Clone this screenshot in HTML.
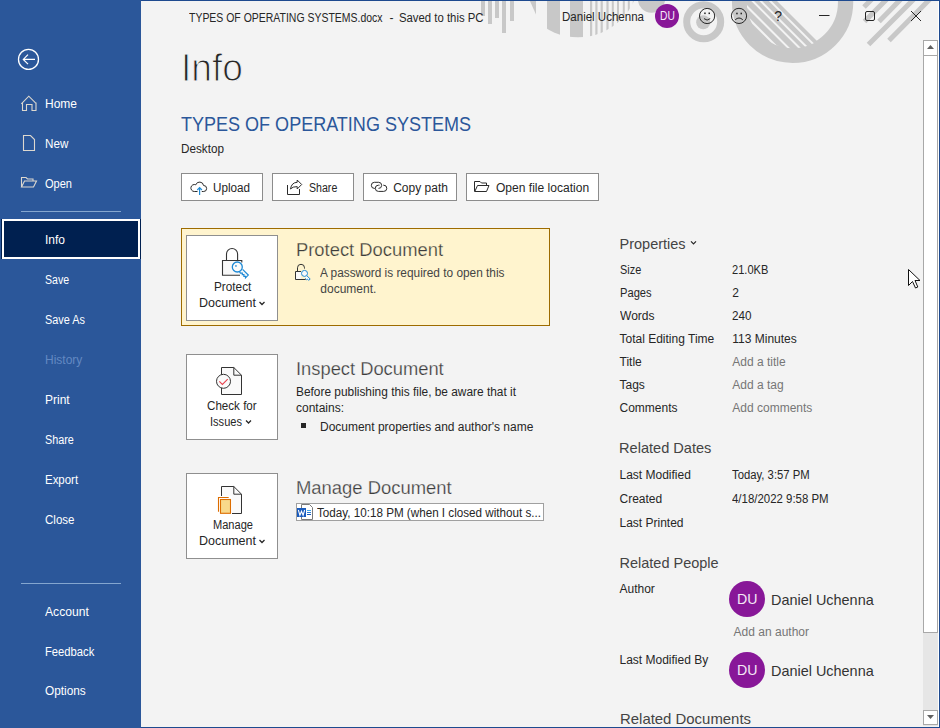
<!DOCTYPE html>
<html><head><meta charset="utf-8"><style>
html,body{margin:0;padding:0;width:940px;height:728px;overflow:hidden;background:#f3f3f3;font-family:"Liberation Sans", sans-serif}
</style></head><body>
<div style="position:relative;width:940px;height:728px;overflow:hidden">
<div style="position:absolute;left:0;top:0;width:141px;height:728px;background:#2b579a"></div>
<svg style="position:absolute;left:0;top:0" width="141" height="728">
<circle cx="28.5" cy="59.4" r="10" fill="none" stroke="#fff" stroke-width="1.3"/>
<path d="M23.6 59.4 H35 M28 54.7 L23.3 59.4 L28 64.1" fill="none" stroke="#fff" stroke-width="1.2"/>
<g fill="none" stroke="#ddd8cf" stroke-width="1.1">
<path d="M21.3 103.8 L28.8 96.2 L36.5 103.8 M22.5 102.5 V110.5 H26.5 V104.5 H32 V110.5 H36 V102.5"/>
<path d="M23.5 135.5 H30.5 L34.5 139.5 V150.5 H23.5 Z"/>
<path d="M21.5 187 V177.5 H26 L27.5 179 H33 V181 M21.5 187 H33.5 L36.5 181 H24.5 Z"/>
</g>
<line x1="21" y1="211.5" x2="121" y2="211.5" stroke="#84a6cf" stroke-width="1"/>
<line x1="21" y1="583.5" x2="121" y2="583.5" stroke="#84a6cf" stroke-width="1"/>
</svg>
<div style="position:absolute;left:1px;top:219px;width:140px;height:40px;background:#002050"></div>
<div style="position:absolute;left:2px;top:219px;width:138px;height:40px;box-sizing:border-box;border:2px solid #fff"></div>
<div style="position:absolute;left:141px;top:0;width:799px;height:728px;background:#f3f3f3"></div>
<svg style="position:absolute;left:0;top:0" width="940" height="100">
<defs><clipPath id="top"><rect x="141" y="1" width="798" height="99"/></clipPath>
<clipPath id="semi"><circle cx="578" cy="-24" r="61.3"/></clipPath>
<clipPath id="inner"><circle cx="792.8" cy="2.3" r="46"/></clipPath>
</defs>
<g clip-path="url(#top)" fill="#c8c8c8">
<rect x="481" y="0" width="4" height="16"/>
<rect x="488" y="0" width="4" height="24"/>
<rect x="495" y="0" width="4" height="18"/>
<rect x="502" y="0" width="4" height="33"/>
<rect x="510" y="0" width="4" height="21"/>
<path d="M529.5 0 H536 V14.5 Z"/>
<g clip-path="url(#semi)">
<path d="M547 0 H560 V40 H547 Z M570 0 H583 V40 H570 Z"/>
<rect x="590" y="0" width="2.2" height="40"/><rect x="595.3" y="0" width="2.2" height="40"/>
<rect x="600.6" y="0" width="2.2" height="40"/><rect x="606.4" y="0" width="2.2" height="40"/>
<rect x="611.8" y="0" width="2" height="40"/><rect x="617" y="0" width="2" height="40"/>
<rect x="622.8" y="0" width="2" height="40"/><rect x="627.8" y="0" width="2" height="40"/>
<rect x="632.8" y="0" width="2" height="40"/>
</g>
<circle cx="651.5" cy="-0.8" r="13.6"/>
<circle cx="703.7" cy="21.8" r="17" fill="none" stroke="#c8c8c8" stroke-width="7"/>
<circle cx="703.2" cy="22.3" r="7"/>
<circle cx="792.6" cy="2.3" r="53" fill="none" stroke="#c8c8c8" stroke-width="15.3"/>
<g clip-path="url(#inner)">
<path d="M700 -76 L852 76 L700 76 Z" fill="#c8c8c8"/>
<path d="M720 -10 L810 80 M730.5 -10 L820.5 80 M741.6 -10 L831.6 80 M749.7 -10 L839.7 80 M759.2 -10 L849.2 80" stroke="#f3f3f3" stroke-width="2" fill="none"/>
</g>
<g stroke="#c8c8c8" stroke-width="5" fill="none">
<path d="M864 7 L872 -1 M864.5 21.5 L888 -2 M879 21.5 L902 -2 M868.5 44.5 L916 -3 M889 40.5 L932 -3"/>
</g>
</g>
</svg>
<div style="position:absolute;left:141px;top:0;width:799px;height:1px;background:#1e4a8f"></div>
<div style="position:absolute;left:939px;top:0;width:1px;height:728px;background:#1e4a8f"></div>
<div style="position:absolute;left:141px;top:727px;width:799px;height:1px;background:#1e4a8f"></div>
<div style="position:absolute;left:654.9px;top:3.7px;width:24.2px;height:24.2px;border-radius:50%;background:#881798"></div>
<svg style="position:absolute;left:690px;top:0" width="250" height="35">
<g fill="none" stroke="#262626" stroke-width="1">
<circle cx="17.1" cy="16" r="7.6"/><path d="M14 18.6 Q17.1 21.6 20.2 18.6"/>
<circle cx="49" cy="15.9" r="7.6"/><path d="M45.2 19.8 Q49 16.2 52.8 19.8"/>
</g>
<g fill="#262626"><rect x="14.2" y="12.5" width="1.5" height="1.6"/><rect x="18.5" y="12.5" width="1.5" height="1.6"/>
<rect x="46.2" y="12.7" width="1.5" height="1.6"/><rect x="50.5" y="12.7" width="1.5" height="1.6"/></g>
<path d="M129 15.5 H139.5" stroke="#262626" stroke-width="1"/>
<rect x="175.5" y="11.5" width="9" height="9" rx="1.5" fill="none" stroke="#262626" stroke-width="1"/>
<path d="M221 11 L231 21 M231 11 L221 21" stroke="#262626" stroke-width="1"/>
</svg>
<div style="position:absolute;left:181px;top:173px;width:82px;height:28px;box-sizing:border-box;border:1px solid #8c8c8c;background:#fff"></div>
<div style="position:absolute;left:272px;top:173px;width:82px;height:28px;box-sizing:border-box;border:1px solid #8c8c8c;background:#fff"></div>
<div style="position:absolute;left:363px;top:173px;width:94px;height:28px;box-sizing:border-box;border:1px solid #8c8c8c;background:#fff"></div>
<div style="position:absolute;left:466px;top:173px;width:133px;height:28px;box-sizing:border-box;border:1px solid #8c8c8c;background:#fff"></div>
<svg style="position:absolute;left:0;top:0" width="620" height="210">
<g fill="none" stroke="#2b2b2b" stroke-width="1">
<path d="M197.5 191.5 H194.3 A3.5 3.5 0 1 1 195.8 184.8 A4 4 0 0 1 203.56 185.5 A3 3 0 1 1 203.7 191.5 H201.8"/>
<path d="M287.5 185 V194.5 H299.5 V189"/>
<path d="M290.5 189 Q291.5 182.5 297.2 182.3 V180 L301.7 184.5 L297.2 189 V186.6 Q292.5 186.5 290.5 189 Z" stroke-linejoin="round"/>
<path d="M375 188.4 H374.4 A3.05 3.05 0 0 1 374.4 182.3 H378.7 A3.05 3.05 0 0 1 378.5 188.4"/>
<path d="M379.5 185.2 H378.4 A3.1 3.1 0 0 0 378.4 191.4 H383.7 A3.1 3.1 0 0 0 383.7 185.2 H383.2"/>
<path d="M474.5 191.5 V181.5 H480 L481.5 183 H486.5 V185.5"/>
<path d="M474.8 191.5 L477.5 185.5 H489 L486.5 191.5 Z"/>
</g>
<path d="M199.6 195 V187.8 M197.3 190 L199.6 187.7 L201.9 190" fill="none" stroke="#1e8ad6" stroke-width="1.2"/>
</svg>
<div style="position:absolute;left:181px;top:228px;width:369px;height:98px;box-sizing:border-box;border:1px solid #9d6b00;background:#fff4ce"></div>
<div style="position:absolute;left:186px;top:235px;width:92px;height:86px;box-sizing:border-box;border:1px solid #8f8f8f;background:#fff"></div>
<div style="position:absolute;left:186px;top:354px;width:92px;height:86px;box-sizing:border-box;border:1px solid #8f8f8f;background:#fff"></div>
<div style="position:absolute;left:301px;top:423px;width:4.5px;height:4.5px;background:#262626"></div>
<div style="position:absolute;left:186px;top:473px;width:92px;height:86px;box-sizing:border-box;border:1px solid #8f8f8f;background:#fff"></div>
<div style="position:absolute;left:296px;top:503px;width:248px;height:18px;box-sizing:border-box;border:1px solid #a0a0a0;background:#fff"></div>
<svg style="position:absolute;left:0;top:0" width="600" height="600">
<g fill="none" stroke="#444" stroke-width="1">
<path d="M259.5 302 L262 304.5 L264.5 302" stroke="#262626" stroke-width="1.25"/>
<path d="M246 420.5 L248.5 423 L251 420.5" stroke="#262626" stroke-width="1.25"/>
<path d="M259.5 540 L262 542.5 L264.5 540" stroke="#262626" stroke-width="1.25"/>
</g>
<!-- lock -->
<path d="M226.5 260.5 V254 A5.55 5.55 0 0 1 237.6 254 V260.5" fill="none" stroke="#333" stroke-width="1.1"/>
<path d="M222.5 260.5 H241.5 V275.3 H222.5 Z" fill="#f8f8f8"/>
<path d="M241.8 262.5 V260.5 H222.5 V275.3 H240" fill="none" stroke="#333" stroke-width="1.1"/>
<path d="M242.6 269.4 L248.3 275.1 L245.5 277.9 V276.3 H243.9 V274.7 H242.3 V273.1 H240.5 L239.5 272" fill="#fafafa" stroke="#1e8ad6" stroke-width="1.2" stroke-linejoin="miter"/>
<circle cx="237.3" cy="267" r="5" fill="#fafafa" stroke="#1e8ad6" stroke-width="1.3"/>
<rect x="235.2" y="265.2" width="1.5" height="1.5" fill="#1e8ad6"/>
<!-- small lock -->
<path d="M297.5 271.5 V267.8 A3.5 3.5 0 0 1 304.5 267.8 V268.6" fill="none" stroke="#333" stroke-width="1"/>
<path d="M301 271.5 H295.5 V279.5 H305.7" fill="none" stroke="#333" stroke-width="1"/>
<rect x="296" y="272" width="5" height="7" fill="#fafafa"/>
<path d="M306.3 275.2 L310.2 279 L308.6 280.3 L307.4 279.1 L306.6 279.7 L305.2 278.3" fill="#fafafa" stroke="#1e8ad6" stroke-width="1"/>
<circle cx="304.5" cy="273.4" r="3" fill="#fafafa" stroke="#1e8ad6" stroke-width="1"/>
<!-- check doc -->
<path d="M221.5 367.5 H233.8 L241.5 375.2 V394.5 H221.5 Z" fill="#fafafa" stroke="#333" stroke-width="1"/>
<path d="M233.8 367.5 V375.2 H241.5" fill="none" stroke="#333" stroke-width="1"/>
<circle cx="223.5" cy="381.3" r="7" fill="#fafafa" stroke="#333" stroke-width="1"/>
<path d="M219.3 381.3 L222.4 384.4 L227.7 379.1" fill="none" stroke="#e8414d" stroke-width="1.1"/>
<!-- manage doc -->
<path d="M221.5 486.5 H233.8 L241.5 494.2 V513.5 H221.5 Z" fill="#fafafa" stroke="#333" stroke-width="1"/>
<path d="M233.8 486.5 V494.2 H241.5" fill="none" stroke="#333" stroke-width="1"/>
<rect x="217" y="496" width="15" height="19" fill="#fff"/>
<path d="M218.5 511.8 V497.5 H228.7" fill="none" stroke="#dc6d00" stroke-width="1.1"/>
<rect x="220.5" y="499.5" width="10" height="13.8" fill="#f8d98b" stroke="#dc6d00" stroke-width="1.1"/>
<!-- word icon -->
<path d="M301.5 504.5 H309.5 L312.5 507.5 V519.5 H301.5 Z" fill="#fff" stroke="#7a7a7a" stroke-width="1"/>
<rect x="297" y="508" width="9" height="9" fill="#185abd"/>
<path d="M298.4 510 L299.9 515.3 L301.5 511.3 L303.1 515.3 L304.6 510" fill="none" stroke="#fff" stroke-width="1.1"/>
<path d="M307 510.5 H311" stroke="#41a5ee" stroke-width="1"/>
<path d="M307 512.5 H311" stroke="#2b7cd3" stroke-width="1"/>
<path d="M307 514.5 H311" stroke="#185abd" stroke-width="1"/>
</svg>
<svg style="position:absolute;left:690px;top:240px" width="10" height="8"><path d="M1 1.3 L3.5 3.8 L6 1.3" fill="none" stroke="#262626" stroke-width="1.2"/></svg>
<div style="position:absolute;left:729px;top:580.6px;width:36px;height:36px;border-radius:50%;background:#881798"></div>
<div style="position:absolute;left:729px;top:651.5px;width:36px;height:36px;border-radius:50%;background:#881798"></div>
<div style="position:absolute;left:923px;top:40px;width:15px;height:686px;background:#e6e6e6"></div>
<div style="position:absolute;left:923px;top:40px;width:15px;height:16px;box-sizing:border-box;border:1px solid #a8a8a8;background:#fff"></div>
<div style="position:absolute;left:923px;top:55px;width:15px;height:578px;box-sizing:border-box;border:1px solid #a8a8a8;background:#fff"></div>
<div style="position:absolute;left:923px;top:710px;width:15px;height:15px;box-sizing:border-box;border:1px solid #a8a8a8;background:#fff"></div>
<svg style="position:absolute;left:923px;top:40px" width="15" height="686">
<path d="M4 9 L7.5 5 L11 9 Z" fill="#606060"/>
<path d="M4 675 L7.5 679 L11 675 Z" fill="#606060"/>
</svg>
<div style="position:absolute;left:938px;top:1px;width:1px;height:726px;background:#fff"></div>
<svg style="position:absolute;left:905px;top:266px" width="16" height="26">
<path d="M3.5 3.5 V19.5 L7.5 15.5 L10.5 22 L12.8 21 L10 14.5 H15 Z" fill="#fff" stroke="#111" stroke-width="1"/>
</svg>
<div style="position:absolute;left:45.00px;top:97.54px;font-size:12px;line-height:12px;color:#fff;white-space:pre;">Home</div>
<div style="position:absolute;left:45.00px;top:137.64px;font-size:12px;line-height:12px;color:#fff;white-space:pre;transform:scaleX(0.9700);transform-origin:0 0;">New</div>
<div style="position:absolute;left:45.00px;top:177.54px;font-size:12px;line-height:12px;color:#fff;white-space:pre;transform:scaleX(0.9200);transform-origin:0 0;">Open</div>
<div style="position:absolute;left:45.00px;top:233.74px;font-size:12px;line-height:12px;color:#fff;white-space:pre;">Info</div>
<div style="position:absolute;left:45.00px;top:273.64px;font-size:12px;line-height:12px;color:#fff;white-space:pre;transform:scaleX(0.8800);transform-origin:0 0;">Save</div>
<div style="position:absolute;left:45.00px;top:313.64px;font-size:12px;line-height:12px;color:#fff;white-space:pre;transform:scaleX(0.9050);transform-origin:0 0;">Save As</div>
<div style="position:absolute;left:45.00px;top:353.64px;font-size:12px;line-height:12px;color:#6389c2;white-space:pre;">History</div>
<div style="position:absolute;left:45.00px;top:393.64px;font-size:12px;line-height:12px;color:#fff;white-space:pre;">Print</div>
<div style="position:absolute;left:45.00px;top:433.64px;font-size:12px;line-height:12px;color:#fff;white-space:pre;transform:scaleX(0.9000);transform-origin:0 0;">Share</div>
<div style="position:absolute;left:45.00px;top:473.64px;font-size:12px;line-height:12px;color:#fff;white-space:pre;transform:scaleX(0.9540);transform-origin:0 0;">Export</div>
<div style="position:absolute;left:45.00px;top:513.64px;font-size:12px;line-height:12px;color:#fff;white-space:pre;transform:scaleX(0.9600);transform-origin:0 0;">Close</div>
<div style="position:absolute;left:45.00px;top:605.84px;font-size:12px;line-height:12px;color:#fff;white-space:pre;transform:scaleX(1.0100);transform-origin:0 0;">Account</div>
<div style="position:absolute;left:45.00px;top:645.64px;font-size:12px;line-height:12px;color:#fff;white-space:pre;transform:scaleX(0.9360);transform-origin:0 0;">Feedback</div>
<div style="position:absolute;left:45.00px;top:685.44px;font-size:12px;line-height:12px;color:#fff;white-space:pre;transform:scaleX(0.9860);transform-origin:0 0;">Options</div>
<div style="position:absolute;left:188.50px;top:12.04px;font-size:12px;line-height:12px;color:#262626;white-space:pre;transform:scaleX(0.8723);transform-origin:0 0;">TYPES OF OPERATING SYSTEMS.docx</div>
<div style="position:absolute;left:389.50px;top:12.04px;font-size:12px;line-height:12px;color:#262626;white-space:pre;">-</div>
<div style="position:absolute;left:399.00px;top:12.04px;font-size:12px;line-height:12px;color:#262626;white-space:pre;transform:scaleX(0.9453);transform-origin:0 0;">Saved to this PC</div>
<div style="position:absolute;left:561.50px;top:10.84px;font-size:12px;line-height:12px;color:#262626;white-space:pre;transform:scaleX(0.9603);transform-origin:0 0;">Daniel Uchenna</div>
<div style="position:absolute;left:659.50px;top:10.14px;font-size:12px;line-height:12px;color:#f6ecf7;white-space:pre;transform:scaleX(0.8533);transform-origin:0 0;">DU</div>
<div style="position:absolute;left:774.30px;top:9.15px;font-size:14px;line-height:14px;color:#262626;white-space:pre;">?</div>
<div style="position:absolute;left:181.00px;top:48.83px;font-size:38px;line-height:38px;color:#262626;white-space:pre;transform:scaleX(0.9781);transform-origin:0 0;-webkit-text-stroke:1.1px #f3f3f3">Info</div>
<div style="position:absolute;left:181.00px;top:113.22px;font-size:21px;line-height:21px;color:#2b579a;white-space:pre;transform:scaleX(0.8580);transform-origin:0 0;">TYPES OF OPERATING SYSTEMS</div>
<div style="position:absolute;left:181.20px;top:142.74px;font-size:12px;line-height:12px;color:#262626;white-space:pre;transform:scaleX(0.9766);transform-origin:0 0;">Desktop</div>
<div style="position:absolute;left:213.40px;top:182.14px;font-size:12px;line-height:12px;color:#262626;white-space:pre;transform:scaleX(0.9729);transform-origin:0 0;">Upload</div>
<div style="position:absolute;left:309.40px;top:182.14px;font-size:12px;line-height:12px;color:#262626;white-space:pre;transform:scaleX(0.8835);transform-origin:0 0;">Share</div>
<div style="position:absolute;left:393.20px;top:182.14px;font-size:12px;line-height:12px;color:#262626;white-space:pre;">Copy path</div>
<div style="position:absolute;left:496.40px;top:182.14px;font-size:12px;line-height:12px;color:#262626;white-space:pre;transform:scaleX(1.0039);transform-origin:0 0;">Open file location</div>
<div style="position:absolute;left:213.50px;top:280.64px;font-size:12px;line-height:12px;color:#262626;white-space:pre;transform:scaleX(0.9812);transform-origin:0 0;">Protect</div>
<div style="position:absolute;left:198.70px;top:297.34px;font-size:12px;line-height:12px;color:#262626;white-space:pre;transform:scaleX(1.0420);transform-origin:0 0;">Document</div>
<div style="position:absolute;left:295.50px;top:240.76px;font-size:18px;line-height:18px;color:#3c3c3c;white-space:pre;transform:scaleX(1.0204);transform-origin:0 0;-webkit-text-stroke:0.25px #fff4ce">Protect Document</div>
<div style="position:absolute;left:320.30px;top:267.24px;font-size:12px;line-height:12px;color:#444444;white-space:pre;transform:scaleX(0.9878);transform-origin:0 0;">A password is required to open this</div>
<div style="position:absolute;left:320.30px;top:283.24px;font-size:12px;line-height:12px;color:#444444;white-space:pre;">document.</div>
<div style="position:absolute;left:207.30px;top:400.24px;font-size:12px;line-height:12px;color:#262626;white-space:pre;transform:scaleX(0.9677);transform-origin:0 0;">Check for</div>
<div style="position:absolute;left:210.30px;top:416.14px;font-size:12px;line-height:12px;color:#262626;white-space:pre;transform:scaleX(0.9225);transform-origin:0 0;">Issues</div>
<div style="position:absolute;left:295.50px;top:360.06px;font-size:18px;line-height:18px;color:#3c3c3c;white-space:pre;transform:scaleX(1.0181);transform-origin:0 0;-webkit-text-stroke:0.25px #f3f3f3">Inspect Document</div>
<div style="position:absolute;left:296.00px;top:386.24px;font-size:12px;line-height:12px;color:#262626;white-space:pre;transform:scaleX(0.9904);transform-origin:0 0;">Before publishing this file, be aware that it</div>
<div style="position:absolute;left:296.00px;top:401.84px;font-size:12px;line-height:12px;color:#262626;white-space:pre;">contains:</div>
<div style="position:absolute;left:320.30px;top:421.14px;font-size:12px;line-height:12px;color:#262626;white-space:pre;transform:scaleX(0.9979);transform-origin:0 0;">Document properties and author&#x27;s name</div>
<div style="position:absolute;left:212.50px;top:519.24px;font-size:12px;line-height:12px;color:#262626;white-space:pre;transform:scaleX(0.9222);transform-origin:0 0;">Manage</div>
<div style="position:absolute;left:198.70px;top:535.44px;font-size:12px;line-height:12px;color:#262626;white-space:pre;transform:scaleX(1.0420);transform-origin:0 0;">Document</div>
<div style="position:absolute;left:295.50px;top:478.76px;font-size:18px;line-height:18px;color:#3c3c3c;white-space:pre;transform:scaleX(1.0237);transform-origin:0 0;-webkit-text-stroke:0.25px #f3f3f3">Manage Document</div>
<div style="position:absolute;left:316.60px;top:507.24px;font-size:12px;line-height:12px;color:#262626;white-space:pre;transform:scaleX(0.9715);transform-origin:0 0;">Today, 10:18 PM (when I closed without s...</div>
<div style="position:absolute;left:619.50px;top:236.93px;font-size:14.5px;line-height:14.5px;color:#444444;white-space:pre;">Properties</div>
<div style="position:absolute;left:619.50px;top:263.84px;font-size:12px;line-height:12px;color:#262626;white-space:pre;transform:scaleX(0.9082);transform-origin:0 0;">Size</div>
<div style="position:absolute;left:732.30px;top:263.84px;font-size:12px;line-height:12px;color:#262626;white-space:pre;transform:scaleX(0.9219);transform-origin:0 0;">21.0KB</div>
<div style="position:absolute;left:619.50px;top:286.84px;font-size:12px;line-height:12px;color:#262626;white-space:pre;transform:scaleX(0.9286);transform-origin:0 0;">Pages</div>
<div style="position:absolute;left:732.30px;top:286.84px;font-size:12px;line-height:12px;color:#262626;white-space:pre;">2</div>
<div style="position:absolute;left:619.50px;top:309.84px;font-size:12px;line-height:12px;color:#262626;white-space:pre;transform:scaleX(1.0043);transform-origin:0 0;">Words</div>
<div style="position:absolute;left:732.30px;top:309.84px;font-size:12px;line-height:12px;color:#262626;white-space:pre;transform:scaleX(0.9735);transform-origin:0 0;">240</div>
<div style="position:absolute;left:619.50px;top:332.84px;font-size:12px;line-height:12px;color:#262626;white-space:pre;">Total Editing Time</div>
<div style="position:absolute;left:732.30px;top:332.84px;font-size:12px;line-height:12px;color:#262626;white-space:pre;">113 Minutes</div>
<div style="position:absolute;left:619.50px;top:355.84px;font-size:12px;line-height:12px;color:#262626;white-space:pre;">Title</div>
<div style="position:absolute;left:732.30px;top:355.84px;font-size:12px;line-height:12px;color:#767676;white-space:pre;">Add a title</div>
<div style="position:absolute;left:619.50px;top:378.84px;font-size:12px;line-height:12px;color:#262626;white-space:pre;">Tags</div>
<div style="position:absolute;left:732.30px;top:378.84px;font-size:12px;line-height:12px;color:#767676;white-space:pre;">Add a tag</div>
<div style="position:absolute;left:619.50px;top:401.84px;font-size:12px;line-height:12px;color:#262626;white-space:pre;">Comments</div>
<div style="position:absolute;left:732.30px;top:401.84px;font-size:12px;line-height:12px;color:#767676;white-space:pre;">Add comments</div>
<div style="position:absolute;left:619.40px;top:440.73px;font-size:14.5px;line-height:14.5px;color:#444444;white-space:pre;transform:scaleX(1.0055);transform-origin:0 0;">Related Dates</div>
<div style="position:absolute;left:619.50px;top:468.94px;font-size:12px;line-height:12px;color:#262626;white-space:pre;">Last Modified</div>
<div style="position:absolute;left:731.70px;top:468.94px;font-size:12px;line-height:12px;color:#262626;white-space:pre;transform:scaleX(0.9418);transform-origin:0 0;">Today, 3:57 PM</div>
<div style="position:absolute;left:619.50px;top:492.94px;font-size:12px;line-height:12px;color:#262626;white-space:pre;">Created</div>
<div style="position:absolute;left:731.70px;top:492.94px;font-size:12px;line-height:12px;color:#262626;white-space:pre;transform:scaleX(0.9525);transform-origin:0 0;">4/18/2022 9:58 PM</div>
<div style="position:absolute;left:619.50px;top:516.94px;font-size:12px;line-height:12px;color:#262626;white-space:pre;">Last Printed</div>
<div style="position:absolute;left:619.50px;top:556.03px;font-size:14.5px;line-height:14.5px;color:#444444;white-space:pre;">Related People</div>
<div style="position:absolute;left:619.50px;top:583.14px;font-size:12px;line-height:12px;color:#262626;white-space:pre;">Author</div>
<div style="position:absolute;left:737.20px;top:591.30px;font-size:15px;line-height:15px;color:#f4e8f6;white-space:pre;transform:scaleX(0.9459);transform-origin:0 0;">DU</div>
<div style="position:absolute;left:770.90px;top:591.90px;font-size:15px;line-height:15px;color:#333333;white-space:pre;transform:scaleX(0.9621);transform-origin:0 0;">Daniel Uchenna</div>
<div style="position:absolute;left:737.20px;top:662.10px;font-size:15px;line-height:15px;color:#f4e8f6;white-space:pre;transform:scaleX(0.9459);transform-origin:0 0;">DU</div>
<div style="position:absolute;left:770.90px;top:662.70px;font-size:15px;line-height:15px;color:#333333;white-space:pre;transform:scaleX(0.9621);transform-origin:0 0;">Daniel Uchenna</div>
<div style="position:absolute;left:733.60px;top:625.84px;font-size:12px;line-height:12px;color:#767676;white-space:pre;">Add an author</div>
<div style="position:absolute;left:619.50px;top:654.04px;font-size:12px;line-height:12px;color:#262626;white-space:pre;">Last Modified By</div>
<div style="position:absolute;left:619.50px;top:712.03px;font-size:14.5px;line-height:14.5px;color:#444444;white-space:pre;transform:scaleX(1.0287);transform-origin:0 0;">Related Documents</div>
</div></body></html>
